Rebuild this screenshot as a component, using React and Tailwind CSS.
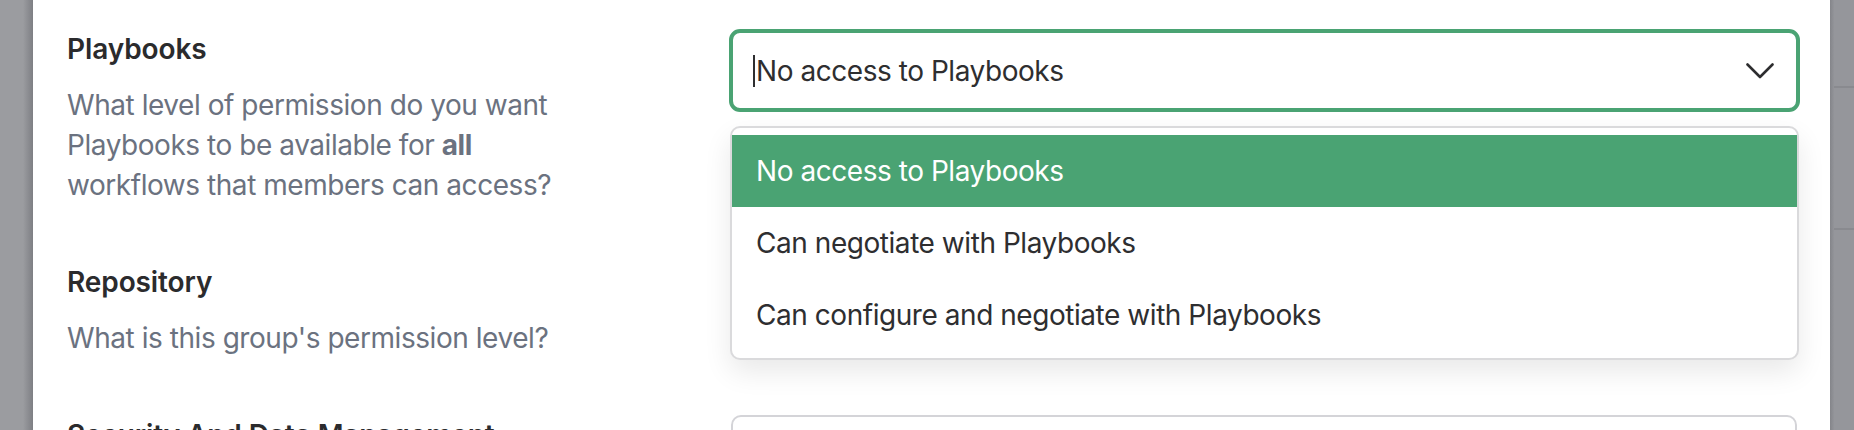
import React from "react";

const OPTIONS = [
  "No access to Playbooks",
  "Can negotiate with Playbooks",
  "Can configure and negotiate with Playbooks",
];

function Chevron() {
  return (
    <svg width="28" height="16" viewBox="0 0 28 16" fill="none">
      <polyline points="1.5,1.5 14,14 26.5,1.5" stroke="#2d2d2f" strokeWidth="2.6" strokeLinecap="round" strokeLinejoin="round" />
    </svg>
  );
}

function Section({ title, children, right }) {
  return (
    <div className="flex items-start">
      <div className="w-[696px] shrink-0 pl-[34px]">
        <h3 className="text-[28px] leading-[40px] font-semibold tracking-[-0.1px] text-[#2b2b2d]">{title}</h3>
        <p className="mt-[16px] max-w-[520px] text-[28px] leading-[40px] tracking-[-0.45px] text-[#6b7280]">{children}</p>
      </div>
      <div className="relative flex-1 pr-[30px]">{right}</div>
    </div>
  );
}

export default function App() {
  return (
    <div className="flex h-[430px] w-full overflow-hidden bg-white font-['Inter','Noto_Sans',sans-serif]">
      {/* backdrop left */}
      <div className="flex w-[33px] shrink-0">
        <div className="w-[23px] bg-[#9b9ca0]" />
        <div className="w-[10px] bg-gradient-to-r from-[#9b9ca0] to-[#7e7f84]" />
      </div>

      <main className="flex-1 flex flex-col gap-[57px] pt-[29px]">
        <Section
          title="Playbooks"
          right={
            <>
              <div className="flex h-[83px] items-center justify-between rounded-[11px] border-[4px] border-[#4aa373] bg-white pl-[20px] pr-[22px]">
                <div className="flex items-center">
                  <span className="inline-block h-[32px] w-[2px] bg-[#2e2e30]" />
                  <span className="ml-[1px] text-[28px] leading-[40px] tracking-[-0.45px] text-[#2e2e30]">No access to Playbooks</span>
                </div>
                <Chevron />
              </div>
              <div className="absolute left-[1px] right-[31px] top-[97px] z-10 rounded-[10px] border-2 border-[#dadadc] bg-white py-[7px] shadow-[0_12px_28px_rgba(0,0,0,0.09)]">
                {OPTIONS.map((o, i) => (
                  <div
                    key={o}
                    className={
                      i === 0
                        ? "flex h-[72px] items-center bg-[#4aa373] pl-[24px] text-[28px] tracking-[-0.45px] text-white"
                        : "flex h-[72px] items-center pl-[24px] text-[28px] tracking-[-0.45px] text-[#2e2e30]"
                    }
                  >
                    {o}
                  </div>
                ))}
              </div>
            </>
          }
        >
          What level of permission do you want Playbooks to be available for{" "}
          <b className="font-bold">all</b> workflows that members can access?
        </Section>

        <Section
          title="Repository"
          right={
            <div className="mx-[2px] h-[79px] rounded-[10px] border-2 border-[#d4d4d8] bg-white" />
          }
        >
          What is this group's permission level?
        </Section>

        <Section
          title="Security And Data Management"
          right={
            <div className="ml-[2px] mr-[3px] h-[79px] rounded-[10px] border-2 border-[#d4d4d8] bg-white" />
          }
        >
          What level of access should this group have?
        </Section>
      </main>

      {/* backdrop right */}
      <div className="flex w-[24px] shrink-0">
        <div className="w-[4px] bg-gradient-to-r from-[#84858a] to-[#939499]" />
        <div className="flex flex-1 flex-col bg-[#95969b]">
          <div className="h-[86px]" />
          <div className="h-[2px] bg-[#898a8f]" />
          <div className="h-[140px]" />
          <div className="h-[2px] bg-[#898a8f]" />
        </div>
      </div>
    </div>
  );
}
